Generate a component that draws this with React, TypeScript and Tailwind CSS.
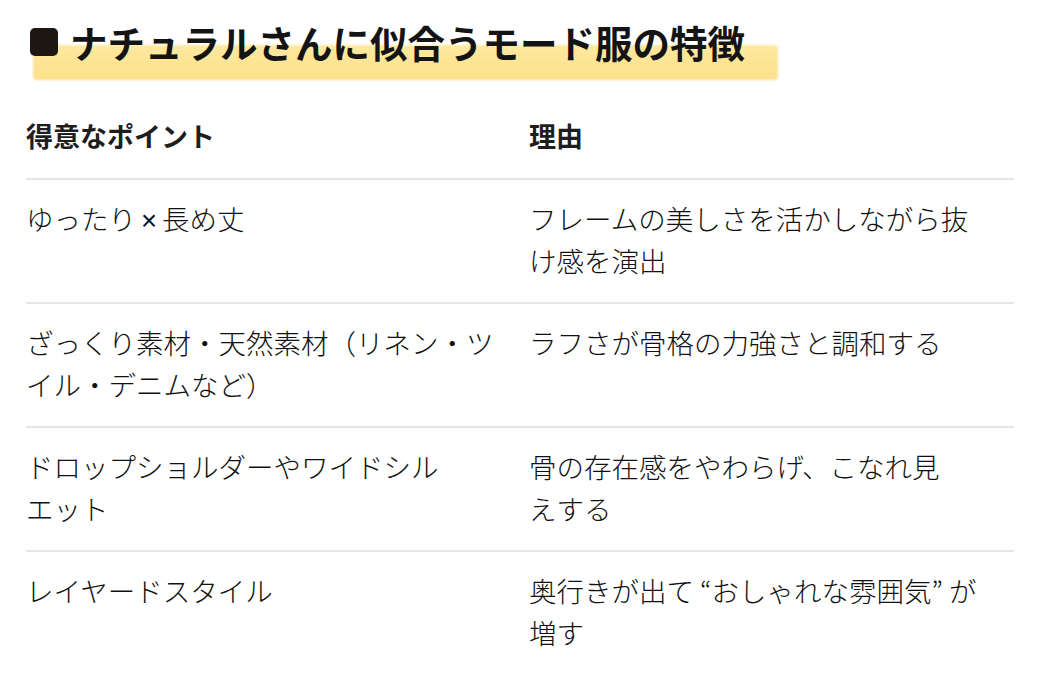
import { ReactNode } from "react";

type Row = {
  point: ReactNode;
  reason: ReactNode;
};

const rows: Row[] = [
  {
    point: (
      <>
        ゆったり
        <span
          className="mx-[5px]"
          style={{ fontFamily: '"Liberation Sans", sans-serif' }}
        >
          ×
        </span>
        長め丈
      </>
    ),
    reason: (
      <>
        フレームの美しさを活かしながら抜
        <br />
        け感を演出
      </>
    ),
  },
  {
    point: (
      <>
        ざっくり素材・天然素材（リネン・ツ
        <br />
        イル・デニムなど）
      </>
    ),
    reason: "ラフさが骨格の力強さと調和する",
  },
  {
    point: (
      <>
        ドロップショルダーやワイドシル
        <br />
        エット
      </>
    ),
    reason: (
      <>
        骨の存在感をやわらげ、こなれ見
        <br />
        えする
      </>
    ),
  },
  {
    point: "レイヤードスタイル",
    reason: (
      <>
        奥行きが出て “おしゃれな雰囲気” が
        <br />
        増す
      </>
    ),
  },
];

function Heading() {
  return (
    <div className="relative h-[96px]">
      <div className="absolute left-[33px] top-[45px] h-[35px] w-[745px] rounded-[4px] bg-gradient-to-b from-[#fde9a0] to-[#fde08a] blur-[1px]" />
      <div className="relative flex items-center gap-[12px] pl-[30px] pt-[20px]">
        <span className="h-[28px] w-[28px] shrink-0 rounded-[5px] bg-[#1c1713]" />
        <h2 className="whitespace-nowrap text-[37.5px] font-bold leading-[44px] text-[#141414]">
          ナチュラルさんに似合うモード服の特徴
        </h2>
      </div>
    </div>
  );
}

export default function App() {
  return (
    <div
      className="h-[684px] w-[1055px] overflow-hidden bg-white"
      style={{ fontFamily: '"Noto Sans CJK JP", "Noto Sans", sans-serif' }}
    >
      <Heading />
      <div className="ml-[26px] w-[988px]">
        <div className="grid grid-cols-[503px_485px] border-b-2 border-[#e6e6e6] pt-[19px] pb-[21px]">
          <div className="text-[27px] font-bold leading-[42px] text-[#1e1e1e]">
            得意なポイント
          </div>
          <div className="text-[27px] font-bold leading-[42px] text-[#1e1e1e]">
            理由
          </div>
        </div>
        {rows.map((row, i) => (
          <div
            key={i}
            className={`grid grid-cols-[503px_485px] pt-[17px] pb-[21px] ${
              i < rows.length - 1 ? "border-b-2 border-[#e6e6e6]" : ""
            }`}
          >
            <div className="min-h-[84px] whitespace-nowrap pr-[16px] text-[27.5px] font-light leading-[42px] text-[#111]">
              {row.point}
            </div>
            <div className="whitespace-nowrap pr-[16px] text-[27.5px] font-light leading-[42px] text-[#111]">
              {row.reason}
            </div>
          </div>
        ))}
      </div>
    </div>
  );
}
